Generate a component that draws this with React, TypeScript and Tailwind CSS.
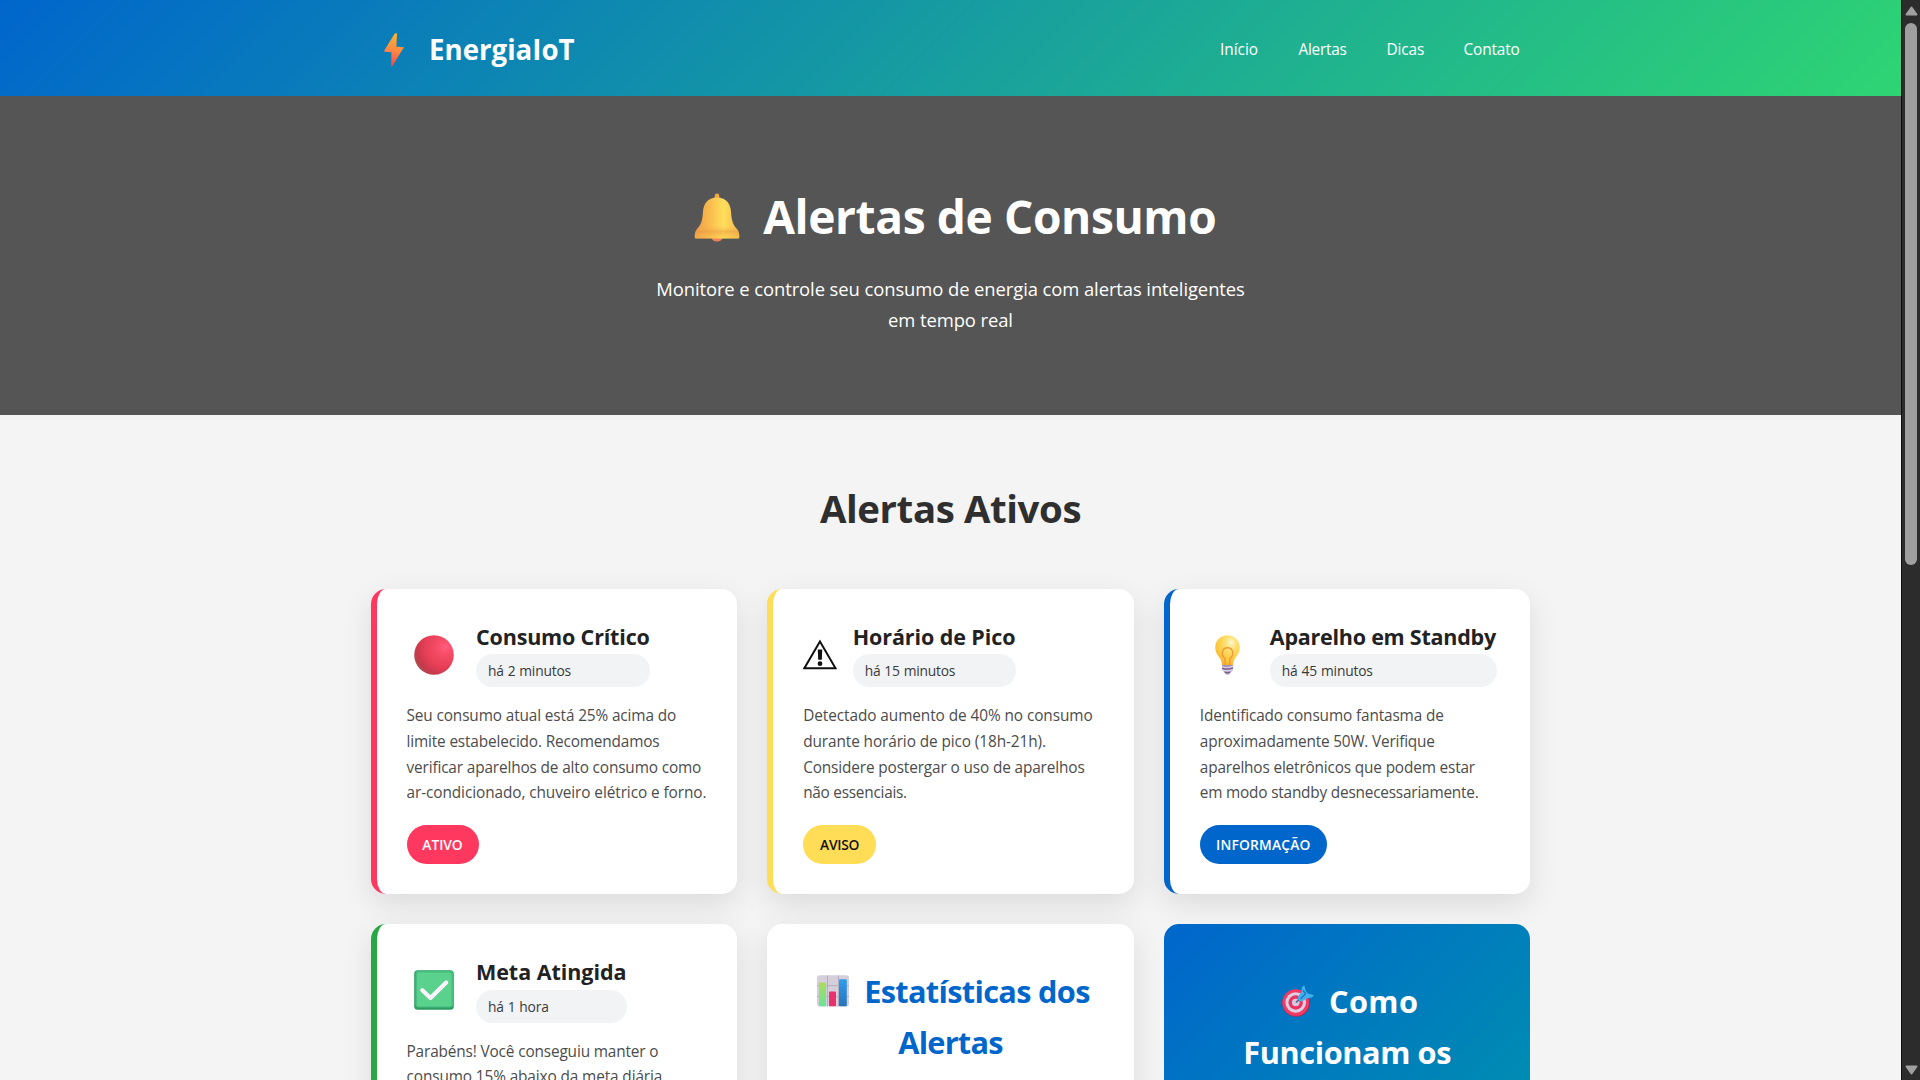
import type { ReactNode } from "react";

type Line = { text: string; tracking: string };

type Alert = {
  border: string;
  icon: ReactNode;
  title: ReactNode;
  time: Line;
  timeWidth: string;
  lines: Line[];
  badge?: { text: string; className: string };
};

function BoltIcon() {
  return (
    <svg width="20" height="34" viewBox="0 0 20 34">
      <defs>
        <linearGradient id="bolt" x1="0.5" y1="0" x2="0.4" y2="1">
          <stop offset="0" stopColor="#ffb62e" />
          <stop offset="0.5" stopColor="#ff8a45" />
          <stop offset="1" stopColor="#f8434d" />
        </linearGradient>
      </defs>
      <path d="M10.800.6 13 .2l-.6 13.600 6.600.3c.6 0 .8.5.5 1L8.400 33c-.4.8-1.200.7-1.200-.3l.2-13.500L.9 18.700c-.7-.1-.9-.6-.6-1.200Z" fill="url(#bolt)" />
    </svg>
  );
}

function BellIcon() {
  return (
    <svg width="46" height="49" viewBox="0 0 46 49">
      <defs>
        <linearGradient id="bell" x1="0" y1="0" x2="1" y2="0">
          <stop offset="0" stopColor="#eb9a4b" />
          <stop offset="0.3" stopColor="#f8b84c" />
          <stop offset="0.65" stopColor="#ffdf5c" />
          <stop offset="1" stopColor="#f5b84e" />
        </linearGradient>
        <linearGradient id="bellRim" x1="0" y1="0" x2="0" y2="1">
          <stop offset="0" stopColor="#f7b34c" stopOpacity="0" />
          <stop offset="0.45" stopColor="#e99a42" stopOpacity="0.55" />
          <stop offset="1" stopColor="#ffc850" stopOpacity="0.3" />
        </linearGradient>
      </defs>
      <ellipse cx="23" cy="44.500" rx="5.500" ry="4" fill="#f0805a" />
      <rect x="20.700" y="0.500" width="4.600" height="8" rx="2.200" fill="#f0a63c" />
      <path d="M23 4.500C13.500 4.500 9.500 11 9 18.500 8.500 27 7 32 3.500 35.500 1.200 38 .7 40 .7 44c0 1 .6 1.600 1.600 1.600h41.400c1 0 1.600-.6 1.600-1.600 0-4-.5-6-2.800-8.500C39 32 37.500 27 37 18.500 36.500 11 32.500 4.500 23 4.500Z" fill="url(#bell)" />
      <path d="M5.500 33h35c3 3 4.800 6 4.800 11 0 1-.6 1.600-1.600 1.600H2.300c-1 0-1.600-.6-1.600-1.600 0-5 1.800-8 4.800-11Z" fill="url(#bellRim)" />
    </svg>
  );
}

function RedCircleIcon() {
  return (
    <svg width="40" height="40" viewBox="0 0 40 40">
      <defs>
        <radialGradient id="ball" cx="0.78" cy="0.3" r="0.85">
          <stop offset="0" stopColor="#ff5d80" />
          <stop offset="0.2" stopColor="#f84e6a" />
          <stop offset="0.6" stopColor="#e63f56" />
          <stop offset="0.85" stopColor="#c8394b" />
          <stop offset="1" stopColor="#b04a50" />
        </radialGradient>
      </defs>
      <circle cx="20" cy="20" r="19.800" fill="url(#ball)" />
    </svg>
  );
}

function WarningIcon() {
  return (
    <svg width="35" height="31" viewBox="0 0 35 31">
      <path d="M17.200 2.200 33 29.400H1.400Z" fill="none" stroke="#111" strokeWidth="2" />
      <path d="M15 10.500h4.500l-.4 10.300h-3.700Z" fill="#111" />
      <circle cx="17.250" cy="24.800" r="2.400" fill="#111" />
    </svg>
  );
}

function BulbIcon() {
  return (
    <svg width="25" height="40" viewBox="0 0 25 40">
      <defs>
        <radialGradient id="bulb" cx="0.65" cy="0.25" r="0.8">
          <stop offset="0" stopColor="#fff6d8" />
          <stop offset="0.25" stopColor="#ffe37a" />
          <stop offset="0.7" stopColor="#ffc93e" />
          <stop offset="1" stopColor="#f5b030" />
        </radialGradient>
      </defs>
      <path d="M12.500.2C5.700.2.3 5.500.3 12.200c0 5 2.300 8 4.500 11 1.500 2.200 2 4 2.300 7h10.800c.3-3 .8-4.800 2.300-7 2.200-3 4.500-6 4.500-11C24.700 5.500 19.300.2 12.500.2Z" fill="url(#bulb)" />
      <path d="M10.300 30 9.800 23c-2-1.200-2.800-3-2.500-5.500.4-3 2.500-4.700 5.200-4.700s4.800 1.700 5.200 4.700c.3 2.500-.5 4.300-2.500 5.500l-.5 7" fill="none" stroke="#f09a3c" strokeWidth="1.400" />
      <path d="M7 30h11.200l-.4 4.600c-.1 1.300-1.100 2-2.300 2.400L14.500 39c-.8.8-3 .8-3.800 0l-1-2c-1.200-.4-2.200-1.100-2.300-2.400Z" fill="#a58fb8" />
      <path d="M6.800 31.500c3 1.300 8 1.300 11.500-.3M7 35c3.500 1 8 .8 11-.4" fill="none" stroke="#dccfe6" strokeWidth="1.300" />
      <path d="M7.200 33.300c3.500 1 7.800.9 10.800-.2M9.500 37.300c2 .5 4.200.5 6-.1" fill="none" stroke="#6d5687" strokeWidth="1" />
    </svg>
  );
}

function CheckIcon() {
  return (
    <svg width="40" height="40" viewBox="0 0 40 40">
      <rect x="0.200" y="0.200" width="39.600" height="39.600" rx="3.500" fill="#2c9c62" />
      <rect x="1.300" y="0.800" width="37.800" height="36.800" rx="3" fill="#45bd7d" />
      <rect x="3" y="2.500" width="34.500" height="34" rx="2" fill="#5ad28d" />
      <path d="M8.300 20.200 16.500 28 32.200 12.500" fill="none" stroke="#fbf3fc" strokeWidth="4.200" strokeLinecap="round" strokeLinejoin="round" />
    </svg>
  );
}

function ChartIcon() {
  return (
    <svg width="32" height="32" viewBox="0 0 32 32">
      <defs>
        <linearGradient id="barGreen" x1="0" y1="0" x2="0" y2="1">
          <stop offset="0" stopColor="#a9de55" />
          <stop offset="1" stopColor="#6be29c" />
        </linearGradient>
        <linearGradient id="barBlue" x1="0" y1="0" x2="0" y2="1">
          <stop offset="0" stopColor="#2f9df0" />
          <stop offset="1" stopColor="#2873b8" />
        </linearGradient>
      </defs>
      <rect x="0" y="0.300" width="32" height="31.200" rx="2.800" fill="#d5cfdc" />
      <path d="M10.500.5v31M21.500.5v31M0 10.700h32M0 21.500h32" stroke="#b5aebf" strokeWidth="1" />
      <rect x="2" y="7.500" width="7" height="23.800" rx="1" fill="url(#barGreen)" />
      <rect x="12" y="16.500" width="7" height="14.800" rx="1" fill="#e8316f" />
      <rect x="22" y="4.300" width="7.800" height="27" rx="1" fill="url(#barBlue)" />
    </svg>
  );
}

function TargetIcon() {
  return (
    <svg width="32" height="32" viewBox="0 0 32 32">
      <ellipse cx="14" cy="18.300" rx="13.800" ry="13.500" fill="#bd2650" />
      <circle cx="13.700" cy="17.500" r="13.300" fill="#f23a63" />
      <circle cx="13.700" cy="17.500" r="10.300" fill="#dccfe3" />
      <circle cx="13.700" cy="17.500" r="7.200" fill="#e8345f" />
      <circle cx="13.700" cy="17.500" r="3.800" fill="#d8c8de" />
      <path d="m14 17.500 5-5" stroke="#4b5a86" strokeWidth="1.400" />
      <path d="m15.800 12.300 3.700-5.500.3-4.600L22.300.3l1.400 5.500 2.300 2.700 6 1.700-2.400 2.400-4.300.6-5.500 3.300c-2.200.3-4.200-1.800-4-4.200Z" fill="#3fb2ee" />
      <path d="m18.500 14 5.200-5.500M21 5.500l2.700 3" stroke="#1c72c0" strokeWidth="1.200" fill="none" />
    </svg>
  );
}

const alerts: Alert[] = [
  {
    border: "border-[#ff3860]",
    icon: <div className="flex w-[54.500px] shrink-0 justify-center pt-1"><RedCircleIcon /></div>,
    title: <span className="tracking-[-0.17px]">Consumo Crítico</span>,
    time: { text: "há 2 minutos", tracking: "tracking-[-0.19px] [word-spacing:0.5px]" },
    timeWidth: "w-[174px]",
    lines: [
      { text: "Seu consumo atual está 25% acima do", tracking: "tracking-[-0.12px]" },
      { text: "limite estabelecido. Recomendamos", tracking: "tracking-[-0.15px]" },
      { text: "verificar aparelhos de alto consumo como", tracking: "tracking-[-0.14px]" },
      { text: "ar-condicionado, chuveiro elétrico e forno.", tracking: "tracking-[-0.08px]" },
    ],
    badge: { text: "ATIVO", className: "w-[72px] bg-[#ff3860] text-white tracking-[-0.06px]" },
  },
  {
    border: "border-[#ffdd57]",
    icon: <div className="flex w-[34.500px] shrink-0 justify-center pt-1"><WarningIcon /></div>,
    title: <span className="tracking-[-0.09px]">Horário de Pico</span>,
    time: { text: "há 15 minutos", tracking: "tracking-[-0.22px] [word-spacing:0.6px]" },
    timeWidth: "w-[163px]",
    lines: [
      { text: "Detectado aumento de 40% no consumo", tracking: "tracking-[-0.07px]" },
      { text: "durante horário de pico (18h-21h).", tracking: "tracking-[-0.09px]" },
      { text: "Considere postergar o uso de aparelhos", tracking: "tracking-[-0.13px]" },
      { text: "não essenciais.", tracking: "tracking-[-0.25px]" },
    ],
    badge: { text: "AVISO", className: "w-[73px] bg-[#ffdd57] text-[#111] tracking-[-0.26px]" },
  },
  {
    border: "border-[#0066cc]",
    icon: <div className="flex w-[55px] shrink-0 justify-center pt-1"><BulbIcon /></div>,
    title: <span className="tracking-[-0.24px]">Aparelho em Standby</span>,
    time: { text: "há 45 minutos", tracking: "tracking-[-0.19px] [word-spacing:0.6px]" },
    timeWidth: "w-[227px]",
    lines: [
      { text: "Identificado consumo fantasma de", tracking: "tracking-[-0.13px]" },
      { text: "aproximadamente 50W. Verifique", tracking: "tracking-[-0.19px]" },
      { text: "aparelhos eletrônicos que podem estar", tracking: "tracking-[-0.16px]" },
      { text: "em modo standby desnecessariamente.", tracking: "tracking-[-0.20px]" },
    ],
    badge: { text: "INFORMAÇÃO", className: "w-[127px] bg-[#0066cc] text-white tracking-[0.19px]" },
  },
  {
    border: "border-[#28a745]",
    icon: <div className="flex w-[54.500px] shrink-0 justify-center pt-1"><CheckIcon /></div>,
    title: <span className="tracking-[-0.05px]">Meta Atingida</span>,
    time: { text: "há 1 hora", tracking: "tracking-[-0.15px] [word-spacing:0.4px]" },
    timeWidth: "w-[151px]",
    lines: [
      { text: "Parabéns! Você conseguiu manter o", tracking: "tracking-[-0.14px]" },
      { text: "consumo 15% abaixo da meta diária", tracking: "tracking-[-0.11px]" },
    ],
  },
];

function AlertCard({ alert }: { alert: Alert }) {
  return (
    <article className={`rounded-[15px] border-l-[6px] bg-white p-[30px] shadow-[0_10px_30px_rgba(0,0,0,0.1)] ${alert.border}`}>
      <div className="mb-4 flex items-center gap-[15px] whitespace-nowrap">
        {alert.icon}
        <div>
          <h3 className="h-[35.840px] text-[21.500px] leading-[35.840px] font-bold text-[#222]">{alert.title}</h3>
          <div className={`h-[33px] rounded-[20px] bg-[#f1f3f5] px-3 pt-[5px] text-[13.820px] leading-[23px] text-[#3a3a3a] ${alert.timeWidth}`}>
            <span className={alert.time.tracking}>{alert.time.text}</span>
          </div>
        </div>
      </div>
      <p className="mb-[19px] text-[15.360px] leading-[25.600px] whitespace-nowrap text-[#4c4c4c]">
        {alert.lines.map((line) => (
          <span key={line.text} className={`block ${line.tracking}`}>{line.text}</span>
        ))}
      </p>
      {alert.badge && (
        <div className={`h-[39px] rounded-[20px] pt-[8.500px] text-center text-[13.820px] leading-[23px] font-semibold ${alert.badge.className}`}>
          {alert.badge.text}
        </div>
      )}
    </article>
  );
}

function Scrollbar() {
  return (
    <div className="flex h-full w-[19px] flex-col items-center border-l border-[#0d0d0d] bg-[#2c2c2c] pt-[6px] pb-[5px]">
      <svg width="13" height="10" viewBox="0 0 13 10">
        <path d="M6.500 1.500 11.500 8.500H1.500Z" fill="#a0a0a0" stroke="#a0a0a0" strokeWidth="2" strokeLinejoin="round" />
      </svg>
      <div className="mt-[7px] h-[542px] w-3 rounded-full bg-[#9f9f9f]" />
      <svg className="mt-auto" width="13" height="10" viewBox="0 0 13 10">
        <path d="M6.500 8.500 1.500 1.500h10Z" fill="#a0a0a0" stroke="#a0a0a0" strokeWidth="2" strokeLinejoin="round" />
      </svg>
    </div>
  );
}

export default function App() {
  return (
    <div className="flex h-[1080px] w-[1920px] overflow-hidden bg-[#f4f4f4] font-['Open_Sans','Noto_Sans',sans-serif]">
      <main className="h-full w-[1901px] overflow-hidden">
        <header className="h-24 bg-[linear-gradient(135deg,#0066cc_0%,#2ed573_100%)]">
          <div className="mx-auto flex h-full w-[1160px] items-center justify-between text-white">
            <div className="flex items-center pt-1 pl-[13px]">
              <BoltIcon />
              <span className="ml-[25.500px] pb-[2px] text-[27.650px] leading-[46px] font-bold">EnergiaIoT</span>
            </div>
            <nav className="flex pt-[3px] pr-[10px] text-[15.360px] leading-[26px] whitespace-nowrap">
              <a className="w-[78.500px]">Início</a>
              <a className="w-[88px] tracking-[-0.25px]">Alertas</a>
              <a className="w-[77px] tracking-[-0.1px]">Dicas</a>
              <a className="w-[57px] tracking-[-0.14px]">Contato</a>
            </nav>
          </div>
        </header>

        <section className="flex h-[318.500px] flex-col items-center bg-[#555] pt-20 text-white">
          <h1 className="flex h-[76.800px] items-center text-[46.080px] leading-[76.800px] font-bold whitespace-nowrap">
            <span className="flex w-[78.500px] pl-[9px] pt-[7px]"><BellIcon /></span>
            <span className="pt-[5px] tracking-[-0.39px]">Alertas de Consumo</span>
          </h1>
          <p className="mt-5 pt-px text-center text-[18.430px] leading-[30.720px] whitespace-nowrap tracking-[-0.09px]">
            <span className="block">Monitore e controle seu consumo de energia com alertas inteligentes</span>
            <span className="block">em tempo real</span>
          </p>
        </section>

        <section className="mx-auto w-[1160px] pt-[60px]">
          <h2 className="mb-12 h-[66px] pt-px text-center text-[38.400px] leading-[64px] font-bold tracking-[-0.4px] text-[#2f2f2f]">
            Alertas Ativos
          </h2>
          <div className="grid h-[1105px] grid-cols-3 grid-rows-[305.320px_770px] gap-[30px]">
            {alerts.map((alert) => (
              <AlertCard key={alert.time.text} alert={alert} />
            ))}
            <article className="rounded-[15px] bg-white pt-[42px] shadow-[0_10px_30px_rgba(0,0,0,0.1)]">
              <h3 className="text-center text-[30.720px] leading-[51.200px] font-bold whitespace-nowrap text-[#0066cc]">
                <span className="flex items-center justify-center">
                  <span className="flex w-[53px] pl-[6px]"><ChartIcon /></span>
                  <span className="tracking-[-0.67px]">Estatísticas dos</span>
                </span>
                <span className="block tracking-[-0.76px]">Alertas</span>
              </h3>
            </article>
            <article className="rounded-[15px] bg-[linear-gradient(135deg,#0066cc_0%,#00b894_100%)] pt-[52px]">
              <h3 className="text-center text-[30.720px] leading-[51.200px] font-bold whitespace-nowrap text-white">
                <span className="flex items-center justify-center">
                  <span className="flex w-[53px] pl-[6px]"><TargetIcon /></span>
                  <span className="tracking-[0.41px]">Como</span>
                </span>
                <span className="block tracking-[-0.39px]">Funcionam os</span>
              </h3>
            </article>
          </div>
        </section>
      </main>
      <Scrollbar />
    </div>
  );
}
